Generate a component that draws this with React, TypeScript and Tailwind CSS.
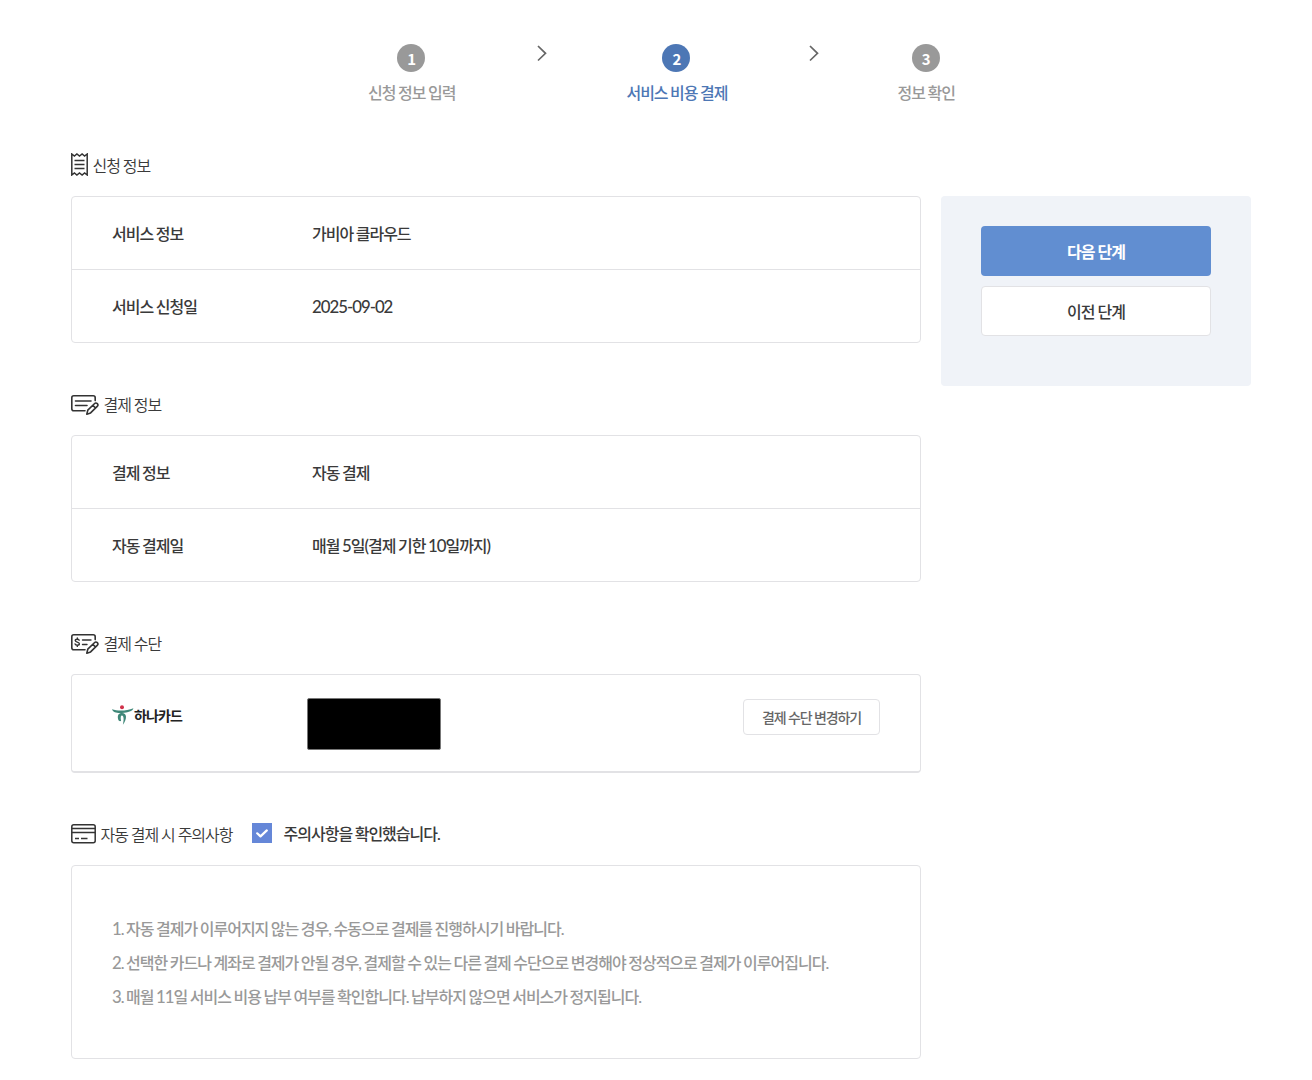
import type { ReactNode } from "react";
import clsx from "clsx";

/* ── Data ── */
const STEPS = [
  { no: 1, label: "신청 정보 입력", active: false },
  { no: 2, label: "서비스 비용 결제", active: true },
  { no: 3, label: "정보 확인", active: false },
];

const SERVICE_ROWS = [
  { label: "서비스 정보", value: "가비아 클라우드" },
  { label: "서비스 신청일", value: "2025-09-02" },
];

const PAYMENT_ROWS = [
  { label: "결제 정보", value: "자동 결제" },
  { label: "자동 결제일", value: "매월 5일(결제 기한 10일까지)" },
];

const NOTICES = [
  "1. 자동 결제가 이루어지지 않는 경우, 수동으로 결제를 진행하시기 바랍니다.",
  "2. 선택한 카드나 계좌로 결제가 안될 경우, 결제할 수 있는 다른 결제 수단으로 변경해야 정상적으로 결제가 이루어집니다.",
  "3. 매월 11일 서비스 비용 납부 여부를 확인합니다. 납부하지 않으면 서비스가 정지됩니다.",
];

/* ── Icons ── */
const ReceiptIcon = () => (
  <svg width="17" height="23" viewBox="0 0 17 23" fill="none" stroke="#333" strokeWidth="1.5" className="mb-0.5 shrink-0">
    <path d="M.8 1v21l2.6-2 2.5 2 2.6-2 2.6 2 2.5-2 2.6 2V1l-2.6 2-2.5-2-2.6 2-2.6-2-2.5 2L.8 1z" />
    <path d="M3.5 7.5h10M3.5 11.5h10M3.5 15.5h10" />
  </svg>
);

const Pencil = () => (
  <path d="M15.8 19.2l1-4.1 6.6-6.4c.9-.9 2.1-.9 2.9-.1s.8 1.900-.1 2.800l-6.600 6.500-3.800 1.300zM21.800 10.300l2.800 2.800" />
);

const FormIcon = () => (
  <svg width="28" height="20" viewBox="0 0 28 20" fill="none" stroke="#333" strokeWidth="1.6" strokeLinecap="round" strokeLinejoin="round" className="mt-0.5 shrink-0">
    <path d="M14 15.8H2.8C1.6 15.8.8 15 .8 13.8V2.8C.8 1.6 1.6.8 2.8.8h19.400c1.200 0 2 .8 2 2v2.800" />
    <path d="M4.500 6h15.500M4.500 10.500h11.500" />
    <Pencil />
  </svg>
);

const MoneyIcon = () => (
  <svg width="28" height="20" viewBox="0 0 28 20" fill="none" stroke="#333" strokeWidth="1.6" strokeLinecap="round" strokeLinejoin="round" className="mt-0.5 shrink-0">
    <path d="M14 15.8H2.8C1.6 15.8.8 15 .8 13.8V2.8C.8 1.6 1.6.8 2.8.8h19.400c1.200 0 2 .8 2 2v2.800" />
    <path strokeWidth="1.4" d="M8.200 6.200C7.900 5.500 7.200 5.200 6.200 5.200c-1.200 0-2 .6-2 1.400C4.200 8.700 8.400 7.500 8.400 9.700c0 .9-.8 1.500-2.100 1.500-1.100 0-1.900-.4-2.200-1.200M6.300 3.900v1.200M6.300 11.300v1.100M11.500 6h8.500M11.500 10.500h4.500" />
    <Pencil />
  </svg>
);

const CardIcon = () => (
  <svg width="25" height="20" viewBox="0 0 25 20" fill="none" stroke="#333" strokeWidth="1.5" className="shrink-0">
    <rect x=".8" y=".8" width="23.4" height="18" rx="2" />
    <path d="M.8 4.500h23.400M.8 8.500h23.400M4 14.500h4M10 14.500h6.500" />
  </svg>
);

const HanaMark = () => (
  <svg width="22" height="20" viewBox="0 0 22 20" fill="none" className="shrink-0">
    <circle cx="10" cy="2.2" r="2" fill="#d0314a" />
    <path d="M0 4.200C5.500 6.100 14.500 6 21.400 3.200c-.4 1.700-2 2.900-5.200 3.700C10.500 8.100 1.500 9.200 0 4.200z" fill="#3f8778" />
    <path d="M6.300 14.800C5 10.700 6.500 8.100 10 8.100c4.800 0 5.600 5.600.9 11.700.5-2.800.9-5.200.6-7.100-.2-1.500-.8-2.200-1.500-2.200-1.300 0-1.700 1.800-.9 5.500-1.300.4-2.500 0-2.800-1.200z" fill="#3f8778" />
  </svg>
);

const ChevronIcon = ({ className }: { className?: string }) => (
  <svg width="10" height="18" viewBox="0 0 10 18" fill="none" stroke="#666" strokeWidth="1.7" className={clsx("shrink-0", className)}>
    <path d="M1 2l7.500 7.300L1 16.500" />
  </svg>
);

/* ── Building blocks ── */

/* Digits are set a little larger than the Hangul around them */
function MixedText({ text }: { text: string }) {
  return text.split(/([0-9()-]+)/).map((part, i) =>
    i % 2 === 1 ? (
      <span key={i} className="text-[16.8px] leading-none">
        {part}
      </span>
    ) : (
      part
    ),
  );
}

function Step({ no, label, active }: { no: number; label: string; active: boolean }) {
  return (
    <li className="flex flex-col items-center">
      <span
        className={clsx(
          "flex size-7 items-center justify-center rounded-full pt-px pl-px font-['Noto_Sans_CJK_KR',sans-serif] text-[15px] leading-none font-bold tracking-normal text-white",
          active ? "bg-[#4d77b5]" : "bg-[#999]",
        )}
      >
        {no}
      </span>
      <span className={clsx("mt-[9px] -mr-px leading-6 whitespace-nowrap", active ? "text-[#4d77b5]" : "text-[#999]")}>{label}</span>
    </li>
  );
}

function SectionTitle({ icon, children, extra }: { icon: ReactNode; children: ReactNode; extra?: ReactNode }) {
  return (
    <div className="flex h-[62px] items-center">
      {icon}
      <h2 className="ml-[4.5px] pt-0.5 font-[350] whitespace-nowrap">{children}</h2>
      {extra}
    </div>
  );
}

function InfoTable({ rows }: { rows: { label: string; value: string }[] }) {
  return (
    <dl className="divide-y divide-[#e2e2e5] rounded border border-[#e2e2e5]">
      {rows.map((row) => (
        <div key={row.label} className="flex h-[73px] items-center px-10 pt-0.5 last:h-[72px]">
          <dt className="w-[200px]">{row.label}</dt>
          <dd>
            <MixedText text={row.value} />
          </dd>
        </div>
      ))}
    </dl>
  );
}

export default function App() {
  return (
    <div className="h-[1080px] overflow-hidden bg-white font-['Lato','Noto_Sans_CJK_KR',sans-serif] text-base font-medium tracking-[-1px] text-[#3a3a3a] [word-spacing:-0.5px]">
      <ol className="flex items-start pt-11 pl-[368px]">
        <Step {...STEPS[0]} />
        <ChevronIcon className="mr-[79px] ml-[83px]" />
        <Step {...STEPS[1]} />
        <ChevronIcon className="mr-[79px] ml-[82px]" />
        <Step {...STEPS[2]} />
      </ol>

      <div className="mt-[29px] flex items-start gap-5 pl-[71px]">
        <main className="w-[850px]">
          <section>
            <SectionTitle icon={<ReceiptIcon />}>신청 정보</SectionTitle>
            <InfoTable rows={SERVICE_ROWS} />
          </section>

          <section className="mt-[30px]">
            <SectionTitle icon={<FormIcon />}>결제 정보</SectionTitle>
            <InfoTable rows={PAYMENT_ROWS} />
          </section>

          <section className="mt-[30px]">
            <SectionTitle icon={<MoneyIcon />}>결제 수단</SectionTitle>
            <div className="flex h-[99px] items-start rounded border border-b-2 border-[#e2e2e5] px-10">
              <div className="mt-[29px] flex w-[195px] items-center">
                <HanaMark />
                <span className="pt-0.5 text-[14px] leading-5 font-bold tracking-[-0.9px] text-[#222]">하나카드</span>
              </div>
              {/* Masked card number */}
              <div className="mt-[23px] h-[52px] w-[134px] rounded-[2px] border border-[#777] bg-black" />
              <button className="mt-6 ml-auto h-9 w-[137px] rounded border border-[#e2e2e5] pt-0.5 text-sm font-medium tracking-[-1.1px] text-[#666]">
                결제 수단 변경하기
              </button>
            </div>
          </section>

          <section className="mt-[30px]">
            <SectionTitle
              icon={<CardIcon />}
              extra={
                <label className="mb-0.5 ml-[19px] flex items-center gap-3 whitespace-nowrap">
                  <span className="flex size-5 items-center justify-center bg-[#6587d8]">
                    <svg width="12" height="9" viewBox="0 0 12 9" fill="none" stroke="#fff" strokeWidth="2.2" strokeLinecap="round" strokeLinejoin="round">
                      <path d="M1.2 4.3l3.3 3.1 6.3-6" />
                    </svg>
                  </span>
                  <span className="pt-0.5">주의사항을 확인했습니다.</span>
                </label>
              }
            >
              자동 결제 시 주의사항
            </SectionTitle>
            <ul className="h-[194px] rounded border border-[#e2e2e5] px-10 pt-[46px] leading-[34px] whitespace-nowrap text-[#999]">
              {NOTICES.map((notice) => (
                <li key={notice}>
                  <MixedText text={notice} />
                </li>
              ))}
            </ul>
          </section>
        </main>

        <aside className="mt-[62px] flex h-[190px] w-[310px] flex-col gap-2.5 rounded bg-[#f0f3f8] px-10 pt-[30px]">
          <button className="h-[50px] rounded bg-[#618ed1] pt-0.5 font-bold text-white">다음 단계</button>
          <button className="h-[50px] rounded border border-[#e2e2e5] bg-white pt-0.5">이전 단계</button>
        </aside>
      </div>
    </div>
  );
}
